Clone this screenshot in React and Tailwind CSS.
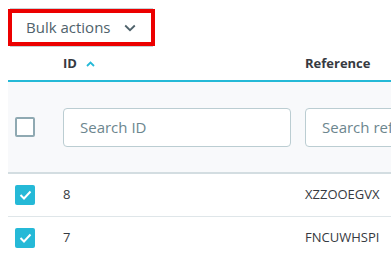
export default function App() {
    const rows = [
        { id: 8, reference: 'XZZOOEGVX' },
        { id: 7, reference: 'FNCUWHSPI' },
    ];

    return (
        <div className="w-[391px] h-[254px] overflow-hidden bg-white pl-2 font-['Open_Sans',sans-serif]">
            {/* Bulk actions button (highlighted) */}
            <div className="pt-[8px]">
                <div className="w-[143px] ml-[2px] border-y border-[#c6d1d6] py-[1px]">
                    <div className="w-[147px] -ml-[2px] -my-[1px] h-[37px] border-4 border-[#ec0000] flex items-center pl-[14px] pr-[15px] justify-between text-[15px] text-[#4f626b]">
                        <span>Bulk actions</span>
                        <svg width="12" height="8" viewBox="0 0 12 8" fill="none">
                            <path d="M1.2 1.5 L6 6.2 L10.8 1.5" stroke="#4f626b" strokeWidth="1.8" />
                        </svg>
                    </div>
                </div>
            </div>

            <div className="w-[540px]">
                {/* Header */}
                <div className="grid grid-cols-[48px_242px_250px] h-[35px] items-center border-b-2 border-[#25b9d7] text-[13px] font-bold text-[#363a41]">
                    <div />
                    <div className="pl-[7px] flex items-center gap-[9px]">
                        <span>ID</span>
                        <svg width="9" height="6" viewBox="0 0 9 6" fill="none">
                            <path d="M1 5 L4.5 1.5 L8 5" stroke="#25b9d7" strokeWidth="1.8" />
                        </svg>
                    </div>
                    <div className="pl-[7px]">Reference</div>
                </div>

                {/* Filters */}
                <div className="grid grid-cols-[48px_242px_250px] h-[92px] items-center bg-[#f8f9fb] border-b-2 border-[#d3dde1]">
                    <div className="pl-[7px]">
                        <div className="w-[20px] h-[20px] rounded-[2px] border-2 border-[#8fa9b2] bg-white" />
                    </div>
                    <div className="px-[7px]">
                        <div className="h-[39px] rounded-[4px] border border-[#bbcdd2] bg-white flex items-center pl-[16px] text-[15px] text-[#6c868e]">
                            Search ID
                        </div>
                    </div>
                    <div className="px-[7px]">
                        <div className="h-[39px] rounded-[4px] border border-[#bbcdd2] bg-white flex items-center pl-[16px] text-[15px] text-[#6c868e] whitespace-nowrap">
                            Search reference
                        </div>
                    </div>
                </div>

                {/* Rows */}
                {rows.map((row) => (
                    <div
                        key={row.id}
                        className="grid grid-cols-[48px_242px_250px] h-[43px] items-center border-b border-[#dfe6e9] text-[13px] text-[#363a41]"
                    >
                        <div className="pl-[7px]">
                            <div className="w-[20px] h-[20px] rounded-[2px] bg-[#25b9d7] flex items-center justify-center">
                                <svg width="13" height="10" viewBox="0 0 13 10" fill="none">
                                    <path d="M1.5 5 L5 8.5 L11.5 1.5" stroke="white" strokeWidth="2" />
                                </svg>
                            </div>
                        </div>
                        <div className="pl-[7px]">{row.id}</div>
                        <div className="pl-[7px]">{row.reference}</div>
                    </div>
                ))}
            </div>
        </div>
    );
}
